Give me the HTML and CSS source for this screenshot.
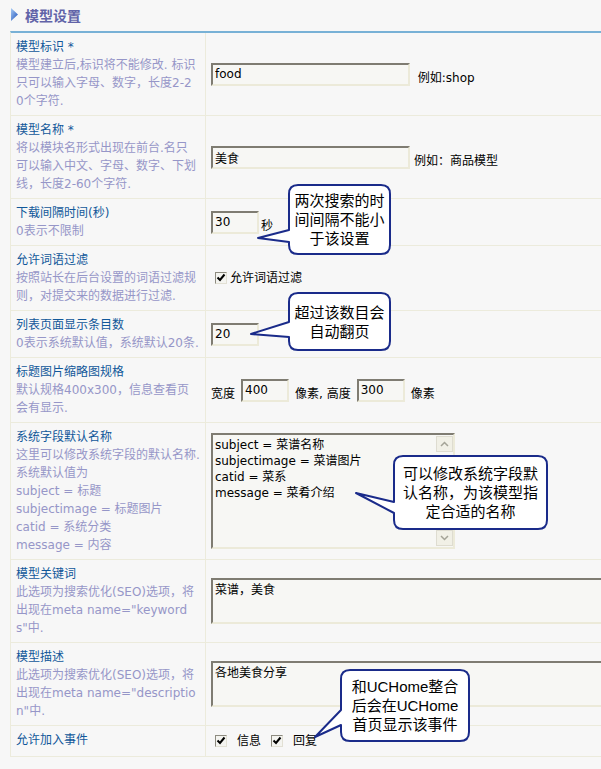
FILE: index.html
```html
<!DOCTYPE html>
<html lang="zh-CN">
<head>
<meta charset="UTF-8">
<title>模型设置</title>
<link rel="stylesheet" href="styles.css">
</head>
<body>
<div class="page">
  <h3 class="head">
    <svg class="arrow" width="7" height="13" viewBox="0 0 7 13">
      <defs>
        <linearGradient id="ag" x1="0" y1="0" x2="1" y2="1">
          <stop offset="0" stop-color="#a8ccf6"/>
          <stop offset="1" stop-color="#1d4fb8"/>
        </linearGradient>
      </defs>
      <path d="M0 0 L7 6.5 L0 13 Z" fill="url(#ag)"/>
    </svg>
    模型设置
  </h3>

  <div class="form">
    <div class="row">
      <div class="label">
        <b>模型标识 *</b>
        <p>模型建立后,标识将不能修改. 标识<br>只可以输入字母、数字，长度2-2<br>0个字符.</p>
      </div>
      <div class="field">
        <input class="txt wide" value="food">
        <span class="unit hint">&nbsp;例如:shop</span>
      </div>
    </div>

    <div class="row">
      <div class="label">
        <b>模型名称 *</b>
        <p>将以模块名形式出现在前台.名只<br>可以输入中文、字母、数字、下划<br>线，长度2-60个字符.</p>
      </div>
      <div class="field">
        <input class="txt wide" value="美食">
        <span class="unit hint">例如：商品模型</span>
      </div>
    </div>

    <div class="row">
      <div class="label">
        <b>下载间隔时间(秒)</b>
        <p>0表示不限制</p>
      </div>
      <div class="field">
        <input class="txt short" value="30">
        <span class="unit sec">秒</span>
      </div>
    </div>

    <div class="row">
      <div class="label">
        <b>允许词语过滤</b>
        <p>按照站长在后台设置的词语过滤规<br>则，对提交来的数据进行过滤.</p>
      </div>
      <div class="field">
        <span class="cb"><svg width="10" height="10" viewBox="0 0 10 10"><path d="M1.5 4.5 L4 7 L8.5 1.5" fill="none" stroke="#000" stroke-width="2"/></svg></span>
        <span class="cb-text">允许词语过滤</span>
      </div>
    </div>

    <div class="row">
      <div class="label">
        <b>列表页面显示条目数</b>
        <p>0表示系统默认值，系统默认20条.</p>
      </div>
      <div class="field">
        <input class="txt short" value="20">
      </div>
    </div>

    <div class="row">
      <div class="label">
        <b>标题图片缩略图规格</b>
        <p>默认规格400x300，信息查看页<br>会有显示.</p>
      </div>
      <div class="field">
        <span class="unit">宽度</span>
        <input class="txt short gap" value="400">
        <span class="unit">像素, 高度</span>
        <input class="txt short gap" value="300">
        <span class="unit">像素</span>
      </div>
    </div>

    <div class="row">
      <div class="label">
        <b>系统字段默认名称</b>
        <p>这里可以修改系统字段的默认名称.<br>系统默认值为<br>subject = 标题<br>subjectimage = 标题图片<br>catid = 系统分类<br>message = 内容</p>
      </div>
      <div class="field">
        <div class="area big">
          <div class="area-text">subject = 菜谱名称<br>subjectimage = 菜谱图片<br>catid = 菜系<br>message = 菜肴介绍</div>
          <div class="sbar">
            <span class="sbtn"><svg width="9" height="6" viewBox="0 0 9 6"><path d="M1 5 L4.5 1.5 L8 5" fill="none" stroke="#a4a396" stroke-width="1.5"/></svg></span>
            <span class="sbtn"><svg width="9" height="6" viewBox="0 0 9 6"><path d="M1 1 L4.5 4.5 L8 1" fill="none" stroke="#a4a396" stroke-width="1.5"/></svg></span>
          </div>
        </div>
      </div>
    </div>

    <div class="row">
      <div class="label">
        <b>模型关键词</b>
        <p>此选项为搜索优化(SEO)选项，将<br>出现在meta name="keyword<br>s"中.</p>
      </div>
      <div class="field">
        <div class="area line">菜谱，美食</div>
      </div>
    </div>

    <div class="row">
      <div class="label">
        <b>模型描述</b>
        <p>此选项为搜索优化(SEO)选项，将<br>出现在meta name="descriptio<br>n"中.</p>
      </div>
      <div class="field">
        <div class="area line">各地美食分享</div>
      </div>
    </div>

    <div class="row">
      <div class="label">
        <b>允许加入事件</b>
      </div>
      <div class="field events">
        <span class="cb"><svg width="10" height="10" viewBox="0 0 10 10"><path d="M1.5 4.5 L4 7 L8.5 1.5" fill="none" stroke="#000" stroke-width="2"/></svg></span>
        <span class="ev-text">信息</span>
        <span class="cb"><svg width="10" height="10" viewBox="0 0 10 10"><path d="M1.5 4.5 L4 7 L8.5 1.5" fill="none" stroke="#000" stroke-width="2"/></svg></span>
        <span class="ev-text">回复</span>
      </div>
    </div>
  </div>

  <!-- 说明气泡 -->
  <div class="tip tip1">
    <svg width="103" height="71" viewBox="288 184 103 71"><path d="M298 185 H381 Q390 185 390 194 V245 Q390 254 381 254 H298 Q289 254 289 245 V242 L258 238 L289 230 V194 Q289 185 298 185 Z"/></svg>
    <span>两次搜索的时<br>间间隔不能小<br>于该设置</span>
  </div>
  <div class="tip tip2">
    <svg width="103" height="59" viewBox="288 292 103 59"><path d="M298 293 H381 Q390 293 390 302 V341 Q390 350 381 350 H298 Q289 350 289 341 V337 L251 334 L289 322 V302 Q289 293 298 293 Z"/></svg>
    <span>超过该数目会<br>自动翻页</span>
  </div>
  <div class="tip tip3">
    <svg width="155" height="75" viewBox="393 455 155 75"><path d="M403 456 H538 Q547 456 547 465 V520 Q547 529 538 529 H403 Q394 529 394 520 V513 L356 493 L394 502 V465 Q394 456 403 456 Z"/></svg>
    <span>可以修改系统字段默<br>认名称，为该模型指<br>定合适的名称</span>
  </div>
  <div class="tip tip4">
    <svg width="130" height="73" viewBox="340 669 130 73"><path d="M350 670 H460 Q469 670 469 679 V732 Q469 741 460 741 H350 Q341 741 341 732 V725 L315 737 L341 710 V679 Q341 670 350 670 Z"/></svg>
    <span>和UCHome整合<br>后会在UCHome<br>首页显示该事件</span>
  </div>
</div>
</body>
</html>
```

FILE: styles.css
```css
* {
  margin: 0;
  padding: 0;
  box-sizing: border-box;
}

html, body {
  overflow: hidden;
}

body {
  background-color: #f7f7f7;
  color: #000;
  font: 12px/18px "DejaVu Sans", "Noto Sans CJK SC", sans-serif;
}

.page {
  position: relative;
  width: 601px;
  height: 769px;
  overflow: hidden;
}

/* 标题 */
.head {
  display: flex;
  align-items: center;
  gap: 7px;
  height: 29px;
  margin-bottom: 2px;
  padding-left: 11px;
  font: bold 14px/18px "Noto Sans CJK SC", sans-serif;
  color: #6163a8;
}

.form {
  width: 700px;
  margin-left: 10px;
  border-top: 2px solid #78b1d6;
  border-left: 1px solid #ecebdc;
}

.row {
  display: grid;
  grid-template-columns: 195px 1fr;
  border-bottom: 1px solid #ecebdc;
}

.label {
  padding: 5px;
  border-right: 1px solid #ecebdc;
  white-space: nowrap;
}

.label b {
  display: block;
  font-weight: normal;
  color: #11589a;
}

.label p {
  color: #9696c8;
}

.field {
  display: flex;
  align-items: center;
  padding: 5px;
}

.txt {
  height: 23px;
  padding: 0 2px;
  border: 2px solid;
  border-color: #7f7c72 #ecead9 #ecead9 #7f7c72;
  background-color: #f7f7f4;
  color: #000;
  font: 12px "DejaVu Sans", "Noto Sans CJK SC", sans-serif;
  outline: none;
}

.wide {
  width: 199px;
}

.short {
  width: 48px;
}

.gap {
  margin: 0 6px;
}

.unit {
  padding-top: 7px;
}

.hint {
  margin-left: 4px;
}

.sec {
  margin-left: 2px;
}

/* 复选框 */
.cb {
  display: inline-flex;
  align-items: center;
  justify-content: center;
  width: 12px;
  height: 12px;
  margin-left: 4px;
  border: 1px solid;
  border-color: #8d8b80 #e2e0d4 #e2e0d4 #8d8b80;
  background-color: #f4f4f0;
}

.cb-text {
  margin-left: 3px;
}

.events {
  padding: 6px 5px;
}

.ev-text {
  margin: 0 6px 0 10px;
}

/* 文本域 */
.area {
  padding: 2px;
  border: 2px solid;
  border-color: #7f7c72 #ecead9 #ecead9 #7f7c72;
  background-color: #f7f7f4;
  line-height: 16px;
}

.area.big {
  display: flex;
  width: 244px;
  height: 116px;
  padding-right: 0;
}

.area-text {
  flex: 1;
}

.sbar {
  display: flex;
  flex-direction: column;
  justify-content: space-between;
  width: 17px;
  margin: -1px 0;
}

.sbtn {
  display: flex;
  align-items: center;
  justify-content: center;
  width: 17px;
  height: 16px;
  border: 1px solid #dedcd0;
  background-color: #f1f0e6;
}

.area.line {
  width: 420px;
  height: 46px;
}

/* 说明气泡 */
.tip {
  position: absolute;
  display: flex;
  align-items: center;
  justify-content: center;
  text-align: center;
  font: 15px/19px "Liberation Sans", "Noto Sans CJK SC", sans-serif;
  color: #000;
}

.tip svg {
  position: absolute;
  left: 0;
  top: 0;
  overflow: visible;
}

.tip svg path {
  fill: #fff;
  stroke: #1a2b8a;
  stroke-width: 2;
  stroke-linejoin: round;
}

.tip span {
  position: relative;
}

.tip1 {
  left: 288px;
  top: 184px;
  width: 103px;
  height: 71px;
}

.tip2 {
  left: 288px;
  top: 292px;
  width: 103px;
  height: 59px;
}

.tip3 {
  left: 393px;
  top: 455px;
  width: 155px;
  height: 75px;
}

.tip4 {
  left: 340px;
  top: 669px;
  width: 130px;
  height: 73px;
}
```
